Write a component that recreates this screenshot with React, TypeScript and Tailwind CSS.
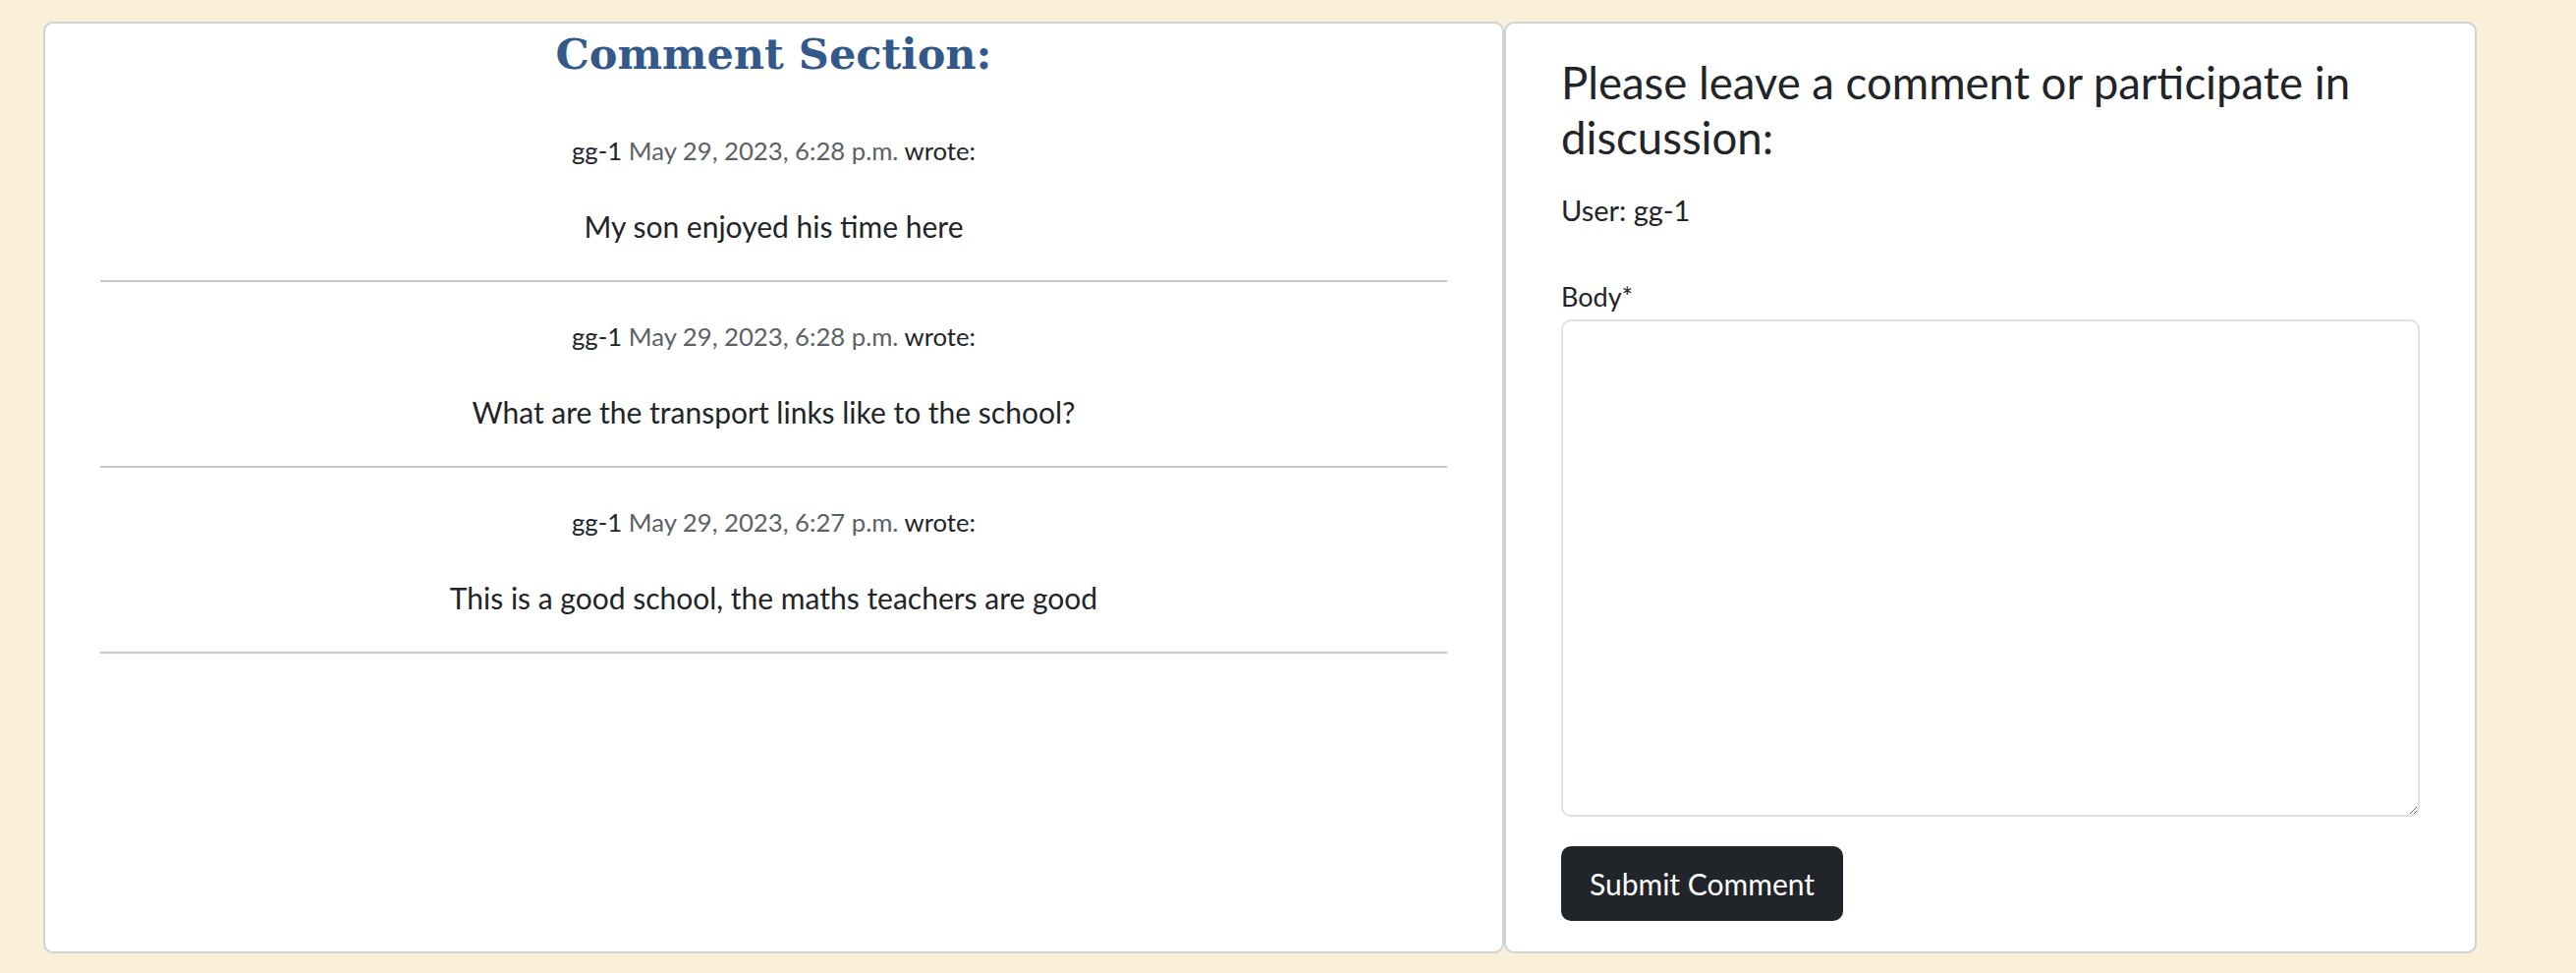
const COMMENTS = [
  { author: "gg-1", date: "May 29, 2023, 6:28 p.m.", body: "My son enjoyed his time here" },
  { author: "gg-1", date: "May 29, 2023, 6:28 p.m.", body: "What are the transport links like to the school?" },
  { author: "gg-1", date: "May 29, 2023, 6:27 p.m.", body: "This is a good school, the maths teachers are good" },
];

const sans = { fontFamily: "Lato, 'Noto Sans', sans-serif" };

export default function App() {
  return (
    <div className="min-h-screen bg-[#faefd9] pl-[44px] pt-[22px] text-[#212529]" style={sans}>
      <div className="flex items-stretch">
        {/* comment list */}
        <div className="w-[1487px] rounded-[10px] border-2 border-[#d2d2d2] bg-white px-[56px] text-center">
          <h2
            className="pt-[3px] text-[43px] font-bold leading-[56px] text-[#33588a]"
            style={{ fontFamily: "'DejaVu Serif', 'Liberation Serif', serif" }}
          >
            Comment Section:
          </h2>
          <div className="mt-[50px]">
            {COMMENTS.map((c, i) => (
              <div key={i}>
                <p className="text-[25.7px] leading-[40px]">
                  {c.author} <span className="text-[#5c6166]">{c.date}</span> wrote:
                </p>
                <p className="mt-[37px] text-[30px] leading-[40px]">{c.body}</p>
                <hr className="mt-[35px] mb-[35px] border-t-2 border-[#c8c8c8]" />
              </div>
            ))}
          </div>
        </div>

        {/* comment form */}
        <div className="w-[990px] rounded-[10px] border-2 border-[#d2d2d2] bg-white px-[56px] pt-[32px] pb-[31px]">
          <h3 className="text-[45.5px] leading-[56px]">
            Please leave a comment or participate in discussion:
          </h3>
          <p className="mt-[26px] text-[29px] leading-[40px]">User: gg-1</p>
          <form className="mt-[48px]">
            <label className="block text-[27px] leading-[40px]">Body*</label>
            <textarea
              className="mt-[3px] block h-[506px] w-full rounded-[10px] border-2 border-[#dee2e6] bg-white p-3 text-[26.7px] outline-none"
            />
            <button
              type="button"
              className="mt-[30px] h-[76px] w-[287px] rounded-[10px] bg-[#212529] text-[30px] text-white"
            >
              Submit Comment
            </button>
          </form>
        </div>
      </div>
    </div>
  );
}
